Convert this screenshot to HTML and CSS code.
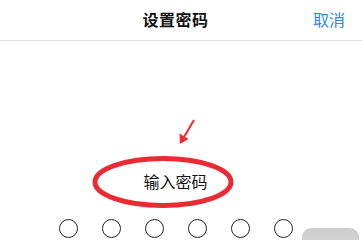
FILE: index.html
```html
<!DOCTYPE html>
<html lang="zh">
<head>
<meta charset="utf-8">
<link rel="stylesheet" href="styles.css">
</head>
<body>
<div class="screen">
  <header class="bar">
    <span class="spacer"></span>
    <h1 class="title">设置密码</h1>
    <button class="cancel">取消</button>
  </header>
  <main class="content">
    <p class="prompt">输入密码</p>
    <div class="dots">
      <span class="dot"></span>
      <span class="dot"></span>
      <span class="dot"></span>
      <span class="dot"></span>
      <span class="dot"></span>
      <span class="dot"></span>
    </div>
  </main>
  <div class="key"></div>
  <svg class="marks" viewBox="0 0 362 240" width="362" height="240">
    <ellipse cx="163" cy="182" rx="68" ry="23.5" fill="none" stroke="#ec2a33" stroke-width="5"/>
    <line x1="194" y1="120" x2="184" y2="137" stroke="#ec2a33" stroke-width="2"/>
    <polygon points="180,144 179.5,133.5 188.5,139" fill="#ec2a33"/>
  </svg>
</div>
</body>
</html>
```
FILE: styles.css
```css
html, body {
  margin: 0;
  padding: 0;
  background: #fff;
}
body {
  font-family: "Noto Sans CJK SC", "Noto Sans", sans-serif;
}
.screen {
  position: relative;
  width: 362px;
  height: 240px;
  overflow: hidden;
  background: #fff;
}
.bar {
  display: grid;
  grid-template-columns: 1fr auto 1fr;
  align-items: center;
  height: 41px;
  padding-right: 11px;
  padding-bottom: 2px;
  box-sizing: border-box;
  border-bottom: 1px solid #dedede;
}
.title {
  margin: 0;
  font-size: 16px;
  font-weight: 700;
  line-height: 20px;
  color: #111;
  letter-spacing: 0.5px;
}
.cancel {
  justify-self: end;
  margin-right: 6px;
  padding: 0;
  border: none;
  background: none;
  font-family: inherit;
  font-size: 16px;
  line-height: 20px;
  color: #2d8ae4;
}
.content {
  display: flex;
  flex-direction: column;
  align-items: center;
  padding-top: 130px;
  padding-right: 11px;
}
.prompt {
  margin: 0;
  font-size: 16px;
  line-height: 20px;
  color: #111;
}
.dots {
  display: flex;
  gap: 24px;
  margin-top: 28px;
}
.dot {
  width: 19px;
  height: 19px;
  box-sizing: border-box;
  border: 1.3px solid #222;
  border-radius: 50%;
}
.key {
  position: absolute;
  left: 302px;
  top: 228px;
  width: 57px;
  height: 30px;
  border-radius: 9px;
  background: linear-gradient(#cdcdcd, #d9d9d9);
}
.marks {
  position: absolute;
  left: 0;
  top: 0;
  pointer-events: none;
}
```
